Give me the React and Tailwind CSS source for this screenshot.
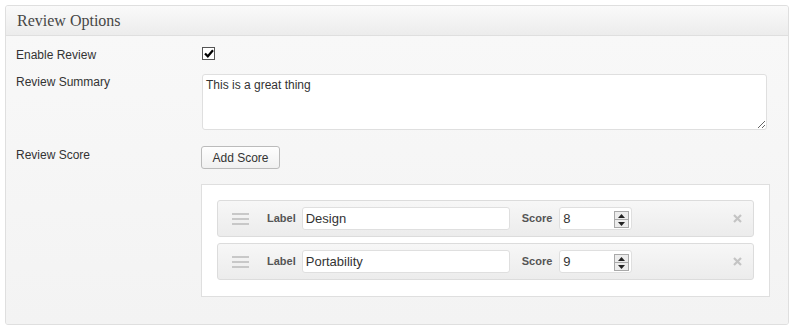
import React from "react";

function Spinner() {
  return (
    <div className="absolute right-[2px] top-[3px] flex h-[17px] w-[15px] flex-col border border-[#a9a9a9] bg-[#ececec]">
      <div className="flex h-[8px] items-center justify-center border-b border-[#a9a9a9]">
        <svg width="7" height="4" viewBox="0 0 7 4"><path d="M3.5 0 L7 4 L0 4 Z" fill="#222" /></svg>
      </div>
      <div className="flex flex-1 items-center justify-center">
        <svg width="7" height="4" viewBox="0 0 7 4"><path d="M0 0 L7 0 L3.5 4 Z" fill="#222" /></svg>
      </div>
    </div>
  );
}

function ScoreRow({ label, score }) {
  return (
    <div className="flex h-[37px] w-[537px] items-center rounded-[3px] border border-[#dcdcdc] bg-gradient-to-b from-[#f7f7f7] to-[#ececec]">
      <div className="ml-[14px] flex w-[17px] flex-col gap-[3px]">
        <div className="h-[2px] bg-[#c8c8c8]" />
        <div className="h-[2px] bg-[#c8c8c8]" />
        <div className="h-[2px] bg-[#c8c8c8]" />
      </div>
      <span className="ml-[18px] text-[11px] font-bold text-[#555]">Label</span>
      <div className="ml-[6px] flex h-[23px] w-[208px] items-center rounded-[3px] border border-[#dfdfdf] bg-white pl-[3px] text-[13px] text-[#333]">
        {label}
      </div>
      <span className="ml-[12px] text-[11px] font-bold text-[#555]">Score</span>
      <div className="relative ml-[7px] flex h-[23px] w-[73px] items-center rounded-[3px] border border-[#dfdfdf] bg-white pl-[3px] text-[13px] text-[#333]">
        {score}
        <Spinner />
      </div>
      <svg className="ml-[101px]" width="9" height="9" viewBox="0 0 9 9">
        <path d="M1 1 L8 8 M8 1 L1 8" stroke="#c4c4c4" strokeWidth="2.2" />
      </svg>
    </div>
  );
}

export default function App() {
  return (
    <div className="h-[328px] w-[795px] bg-white pl-[5px] pt-[5px]" style={{ fontFamily: '"Liberation Sans", Arial, sans-serif' }}>
      <div className="h-[320px] w-[784px] overflow-hidden rounded-[3px] border border-[#dfdfdf] bg-[#f5f5f5]">
        <div className="flex h-[30px] items-center border-b border-[#dfdfdf] bg-gradient-to-b from-[#fafafa] to-[#ececec] pl-[11px]">
          <span className="text-[16px] text-[#464646]" style={{ fontFamily: '"Liberation Serif", "Times New Roman", serif' }}>
            Review Options
          </span>
        </div>
        <div className="h-[289px] bg-gradient-to-b from-[#f8f8f8] to-[#f3f3f3] pt-[11px]">
          <div className="flex h-[14px] items-start">
            <div className="w-[196px] pl-[10px] pt-[1px] text-[12px] leading-[14px] text-[#333]">Enable Review</div>
            <div className="flex h-[13px] w-[13px] items-center justify-center border border-[#555] bg-white">
              <svg width="10" height="9" viewBox="0 0 10 9">
                <path d="M1 4.5 L3.8 7.3 L9 1.2" stroke="#000" strokeWidth="2.2" fill="none" />
              </svg>
            </div>
          </div>
          <div className="mt-[13px] flex h-[56px] items-start">
            <div className="w-[196px] pl-[10px] pt-[1px] text-[12px] leading-[14px] text-[#333]">Review Summary</div>
            <textarea
              defaultValue="This is a great thing"
              className="block h-[56px] w-[565px] rounded-[3px] border border-[#dfdfdf] bg-white px-[3px] py-[3px] text-[12px] leading-[15px] text-[#333] outline-none"
              style={{ fontFamily: '"Liberation Sans", Arial, sans-serif' }}
            />
          </div>
          <div className="mt-[16px] flex items-start">
            <div className="w-[195px] pl-[10px] pt-[2px] text-[12px] leading-[14px] text-[#333]">Review Score</div>
            <div className="flex flex-col">
              <div className="flex h-[23px] w-[79px] items-center justify-center rounded-[3px] border border-[#bbb] bg-gradient-to-b from-[#fefefe] to-[#f0f0f0] text-[12px] leading-[14px] text-[#333]">
                Add Score
              </div>
              <div className="mt-[15px] flex h-[113px] w-[569px] flex-col gap-[6px] border border-[#dfdfdf] bg-white pl-[15px] pt-[15px]">
                <ScoreRow label="Design" score="8" />
                <ScoreRow label="Portability" score="9" />
              </div>
            </div>
          </div>
        </div>
      </div>
    </div>
  );
}
